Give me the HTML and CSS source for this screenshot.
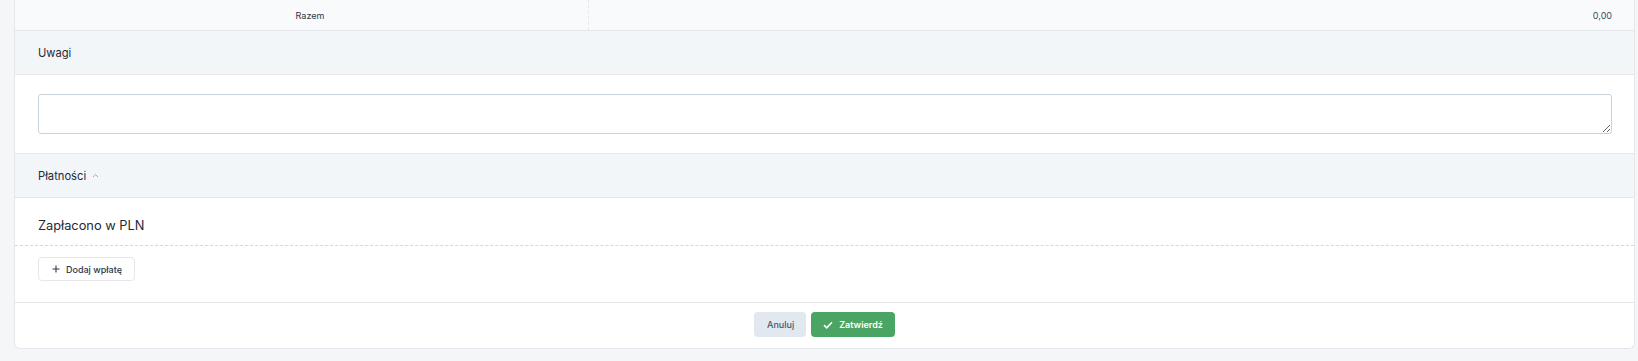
FILE: index.html
```html
<!DOCTYPE html>
<html lang="pl">
<head>
    <meta charset="UTF-8">
    <meta name="viewport" content="width=device-width, initial-scale=1.0">
    <title>Dokument</title>
    <link rel="stylesheet" href="styles.css">
</head>
<body>
    <div class="page">
        <div class="card">
            <div class="summary-row">
                <div class="summary-label">Razem</div>
                <div class="summary-value">0,00</div>
            </div>

            <div class="section-head">Uwagi</div>
            <div class="section-body notes">
                <textarea id="notes" name="notes"></textarea>
            </div>

            <div class="section-head">
                Płatności
                <svg class="chevron" width="7" height="5" viewBox="0 0 7 5">
                    <path d="M1 4 L3.5 1.5 L6 4" fill="none" stroke="#a3aab5" stroke-width="1"/>
                </svg>
            </div>
            <div class="paid-title">Zapłacono w PLN</div>
            <div class="paid-actions">
                <button type="button" class="btn-add">
                    <svg width="8" height="8" viewBox="0 0 8 8">
                        <path d="M4 0.5 V7.5 M0.5 4 H7.5" stroke="#2d3748" stroke-width="1.1"/>
                    </svg>
                    Dodaj wpłatę
                </button>
            </div>

            <div class="footer">
                <button type="button" class="btn btn-cancel">Anuluj</button>
                <button type="submit" class="btn btn-ok">
                    <svg width="10" height="8" viewBox="0 0 10 8">
                        <path d="M1 4.2 L3.7 6.8 L9 1.2" fill="none" stroke="#ffffff" stroke-width="1.6"/>
                    </svg>
                    Zatwierdź
                </button>
            </div>
        </div>
    </div>
</body>
</html>
```

FILE: styles.css
```css
body {
    font-family: Inter, "Noto Sans", Arial, sans-serif;
    margin: 0;
    background-color: #f5f6f8;
    color: #1f2937;
}

.page {
    padding: 0 3px 13px 14px;
}

.card {
    background-color: #ffffff;
    border: 1px solid #e4e7ec;
    border-top: none;
    border-radius: 0 0 6px 6px;
}

.summary-row {
    display: grid;
    grid-template-columns: 573px 1fr;
    height: 30px;
    background-color: #f9fafc;
    border-bottom: 1px solid #e4e7ec;
    font-size: 9px;
}

.summary-label {
    display: flex;
    align-items: center;
    justify-content: center;
    padding-left: 17px;
    color: #2d3748;
}

.summary-value {
    display: flex;
    align-items: center;
    justify-content: flex-end;
    padding-right: 22px;
    border-left: 1px dashed #e4e7ec;
    color: #3b4a63;
}

.section-head {
    display: flex;
    align-items: center;
    gap: 6px;
    height: 43px;
    padding: 0 23px;
    background-color: #f3f6f9;
    border-bottom: 1px solid #e4e7ec;
    font-size: 11.2px;
    color: #1f2937;
}

.chevron {
    margin-top: -1px;
}

.section-body.notes {
    padding: 19px 22px 19px 23px;
    border-bottom: 1px solid #e4e7ec;
}

textarea {
    display: block;
    width: 100%;
    height: 40px;
    box-sizing: border-box;
    border: 1px solid #c9d1db;
    border-radius: 3px;
    resize: vertical;
    font-family: inherit;
    font-size: 11px;
}

.paid-title {
    padding: 20px 23px 11px;
    line-height: 16px;
    font-size: 12.8px;
    color: #1f2937;
    border-bottom: 1px dashed #d3d8df;
}

.paid-actions {
    padding: 11px 23px 21px;
    border-bottom: 1px solid #e4e7ec;
}

.btn-add {
    display: flex;
    align-items: center;
    gap: 6px;
    height: 24px;
    padding: 0 12px 0 13px;
    background-color: #ffffff;
    border: 1px solid #e4e7ec;
    border-radius: 4px;
    font-family: inherit;
    font-size: 9px;
    font-weight: 500;
    color: #2d3748;
}

.footer {
    display: flex;
    justify-content: center;
    gap: 5px;
    padding: 9px 0 11px;
}

.btn {
    display: flex;
    align-items: center;
    gap: 6px;
    height: 25px;
    border: none;
    border-radius: 4px;
    font-family: inherit;
    font-size: 9px;
    font-weight: 500;
    cursor: pointer;
}

.btn-cancel {
    padding: 0 12px 0 13px;
    background-color: #e2e8f0;
    color: #4a5568;
}

.btn-ok {
    padding: 0 12px 0 12px;
    background-color: #4aa463;
    color: #ffffff;
    font-weight: 600;
}
```
